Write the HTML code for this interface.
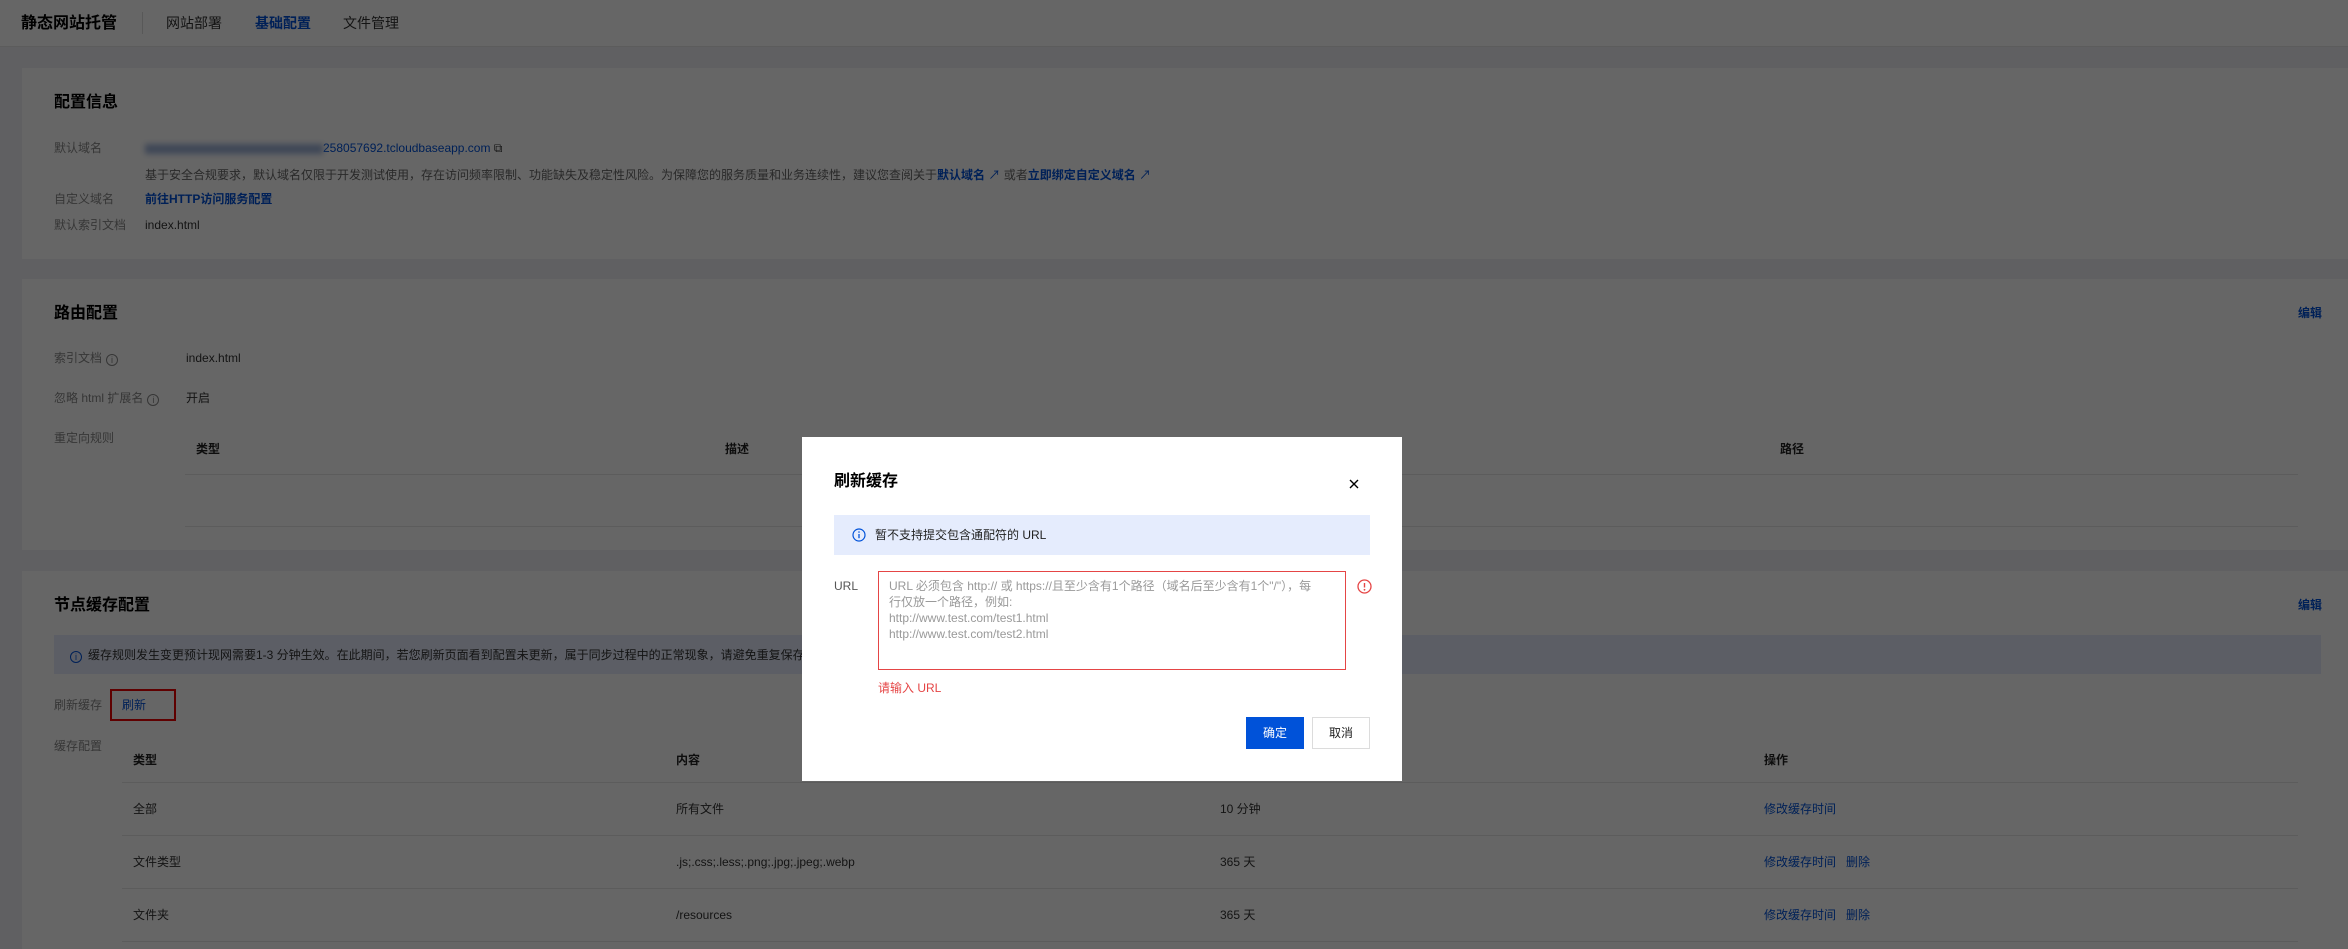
<!DOCTYPE html>
<html style="width:2348px;height:949px;overflow:hidden"><head><meta charset="utf-8">
<style>
*{margin:0;padding:0;box-sizing:border-box}
body{width:2348px;height:949px;overflow:hidden;background:#f0f1f5;font-family:"Liberation Sans","Noto Sans CJK SC",sans-serif;font-size:12px;color:#333;position:relative}
.a{position:absolute;white-space:nowrap;line-height:16px}
.lb{color:#888}
.bl{color:#0052d9}
.h{font-size:16px;font-weight:bold;color:#000;line-height:20px}
.card{position:absolute;background:#fff;left:22px;right:0}
.ln{position:absolute;height:1px;background:#e7e7e7}
.th{font-weight:bold;color:#222}
.ic{display:inline-block;width:12px;height:12px;border:1px solid #888;border-radius:50%;font-size:9px;line-height:10px;text-align:center;vertical-align:-1px;margin-left:4px}
#ov{position:absolute;left:0;top:0;width:2348px;height:949px;background:rgba(0,0,0,0.6)}
</style></head><body>
<div style="position:absolute;left:0;top:0;width:2348px;height:47px;background:#fff;border-bottom:1px solid #e5e5e5"></div>
<div class="a" style="left:21px;top:14px;font-size:16px;font-weight:bold;color:#000;line-height:20px">静态网站托管</div>
<div style="position:absolute;left:142px;top:12px;width:1px;height:22px;background:#ddd"></div>
<div class="a" style="left:166px;top:14px;font-size:14px;line-height:18px">网站部署</div>
<div class="a" style="left:255px;top:14px;font-size:14px;line-height:18px;color:#0052d9;font-weight:bold">基础配置</div>
<div class="a" style="left:343px;top:14px;font-size:14px;line-height:18px">文件管理</div>

<div class="card" style="top:68px;height:191px"></div>
<div class="a h" style="left:54px;top:93px">配置信息</div>
<div class="a lb" style="left:54px;top:140px">默认域名</div>
<div class="a bl" style="left:145px;top:140px"><span style="display:inline-block;width:178px;height:10px;background:#9fb3d9;filter:blur(3px);vertical-align:middle"></span>258057692.tcloudbaseapp.com <span style="color:#333">⧉</span></div>
<div class="a" style="left:145px;top:167px;color:#666">基于安全合规要求，默认域名仅限于开发测试使用，存在访问频率限制、功能缺失及稳定性风险。为保障您的服务质量和业务连续性，建议您查阅关于<span class="bl" style="font-weight:bold">默认域名</span> <span class="bl">↗</span> 或者<span class="bl" style="font-weight:bold">立即绑定自定义域名</span> <span class="bl">↗</span></div>
<div class="a lb" style="left:54px;top:191px">自定义域名</div>
<div class="a bl" style="left:145px;top:191px;font-weight:bold">前往HTTP访问服务配置</div>
<div class="a lb" style="left:54px;top:217px">默认索引文档</div>
<div class="a" style="left:145px;top:217px">index.html</div>

<div class="card" style="top:279px;height:271px"></div>
<div class="a h" style="left:54px;top:304px">路由配置</div>
<div class="a bl" style="left:2298px;top:305px;font-weight:bold">编辑</div>
<div class="a lb" style="left:54px;top:350px">索引文档<span class="ic">i</span></div>
<div class="a" style="left:186px;top:350px">index.html</div>
<div class="a lb" style="left:54px;top:390px">忽略 html 扩展名<span class="ic">i</span></div>
<div class="a" style="left:186px;top:390px">开启</div>
<div class="a lb" style="left:54px;top:430px">重定向规则</div>
<div class="a th" style="left:196px;top:441px">类型</div>
<div class="a th" style="left:725px;top:441px">描述</div>
<div class="a th" style="left:1780px;top:441px">路径</div>
<div class="ln" style="left:185px;width:2113px;top:474px"></div>
<div class="ln" style="left:185px;width:2113px;top:526px"></div>

<div class="card" style="top:571px;height:378px"></div>
<div class="a h" style="left:54px;top:596px">节点缓存配置</div>
<div class="a bl" style="left:2298px;top:597px;font-weight:bold">编辑</div>
<div style="position:absolute;left:54px;top:635px;width:2267px;height:39px;background:#e5ecfd"></div>
<div class="a" style="left:70px;top:647px;color:#333"><span class="ic" style="border-color:#0052d9;color:#0052d9;margin:0 6px 0 0">i</span>缓存规则发生变更预计现网需要1-3 分钟生效。在此期间，若您刷新页面看到配置未更新，属于同步过程中的正常现象，请避免重复保存。</div>
<div class="a lb" style="left:54px;top:697px">刷新缓存</div>
<div style="position:absolute;left:110px;top:689px;width:66px;height:32px;border:2px solid #e00"></div>
<div class="a bl" style="left:122px;top:697px">刷新</div>
<div class="a lb" style="left:54px;top:738px">缓存配置</div>
<div class="a th" style="left:133px;top:752px">类型</div>
<div class="a th" style="left:676px;top:752px">内容</div>
<div class="a th" style="left:1764px;top:752px">操作</div>
<div class="ln" style="left:122px;width:2176px;top:782px"></div>
<div class="a" style="left:133px;top:801px">全部</div><div class="a" style="left:676px;top:801px">所有文件</div><div class="a" style="left:1220px;top:801px">10 分钟</div><div class="a bl" style="left:1764px;top:801px">修改缓存时间</div>
<div class="ln" style="left:122px;width:2176px;top:835px"></div>
<div class="a" style="left:133px;top:854px">文件类型</div><div class="a" style="left:676px;top:854px">.js;.css;.less;.png;.jpg;.jpeg;.webp</div><div class="a" style="left:1220px;top:854px">365 天</div><div class="a bl" style="left:1764px;top:854px">修改缓存时间&nbsp;&nbsp;&nbsp;删除</div>
<div class="ln" style="left:122px;width:2176px;top:888px"></div>
<div class="a" style="left:133px;top:907px">文件夹</div><div class="a" style="left:676px;top:907px">/resources</div><div class="a" style="left:1220px;top:907px">365 天</div><div class="a bl" style="left:1764px;top:907px">修改缓存时间&nbsp;&nbsp;&nbsp;删除</div>
<div class="ln" style="left:122px;width:2176px;top:941px"></div>

<div id="ov"></div>

<div style="position:absolute;left:802px;top:437px;width:600px;height:344px;background:#fff"></div>
<div class="a h" style="left:834px;top:472px">刷新缓存</div>
<svg style="position:absolute;left:1349px;top:479px" width="10" height="10" viewBox="0 0 10 10"><path d="M1 1L9 9M9 1L1 9" stroke="#000" stroke-width="1.4"/></svg>
<div style="position:absolute;left:834px;top:515px;width:536px;height:40px;background:#e5ecfd"></div>
<svg style="position:absolute;left:852px;top:528px" width="14" height="14" viewBox="0 0 14 14"><circle cx="7" cy="7" r="6" fill="none" stroke="#0052d9" stroke-width="1.2"/><path d="M7 6v4.2" stroke="#0052d9" stroke-width="1.3"/><circle cx="7" cy="4" r="0.8" fill="#0052d9"/></svg>
<div class="a" style="left:875px;top:527px;color:#222">暂不支持提交包含通配符的 URL</div>
<div class="a" style="left:834px;top:578px;color:#555">URL</div>
<div style="position:absolute;left:878px;top:571px;width:468px;height:99px;border:1px solid #e54545"></div>
<div class="a" style="left:889px;top:578px;color:#999;line-height:16px">URL 必须包含 http:// 或 https://且至少含有1个路径（域名后至少含有1个"/"），每<br>行仅放一个路径，例如:<br>http://www.test.com/test1.html<br>http://www.test.com/test2.html</div>
<svg style="position:absolute;left:1357px;top:579px" width="15" height="15" viewBox="0 0 15 15"><circle cx="7.5" cy="7.5" r="6.5" fill="none" stroke="#e54545" stroke-width="1.3"/><path d="M7.5 4v4.5" stroke="#e54545" stroke-width="1.4"/><circle cx="7.5" cy="10.8" r="0.9" fill="#e54545"/></svg>
<div class="a" style="left:878px;top:680px;color:#e54545">请输入 URL</div>
<div style="position:absolute;left:1246px;top:717px;width:58px;height:32px;background:#0052d9;color:#fff;text-align:center;line-height:32px">确定</div>
<div style="position:absolute;left:1312px;top:717px;width:58px;height:32px;background:#fff;border:1px solid #dcdcdc;color:#222;text-align:center;line-height:30px">取消</div>
</body></html>
